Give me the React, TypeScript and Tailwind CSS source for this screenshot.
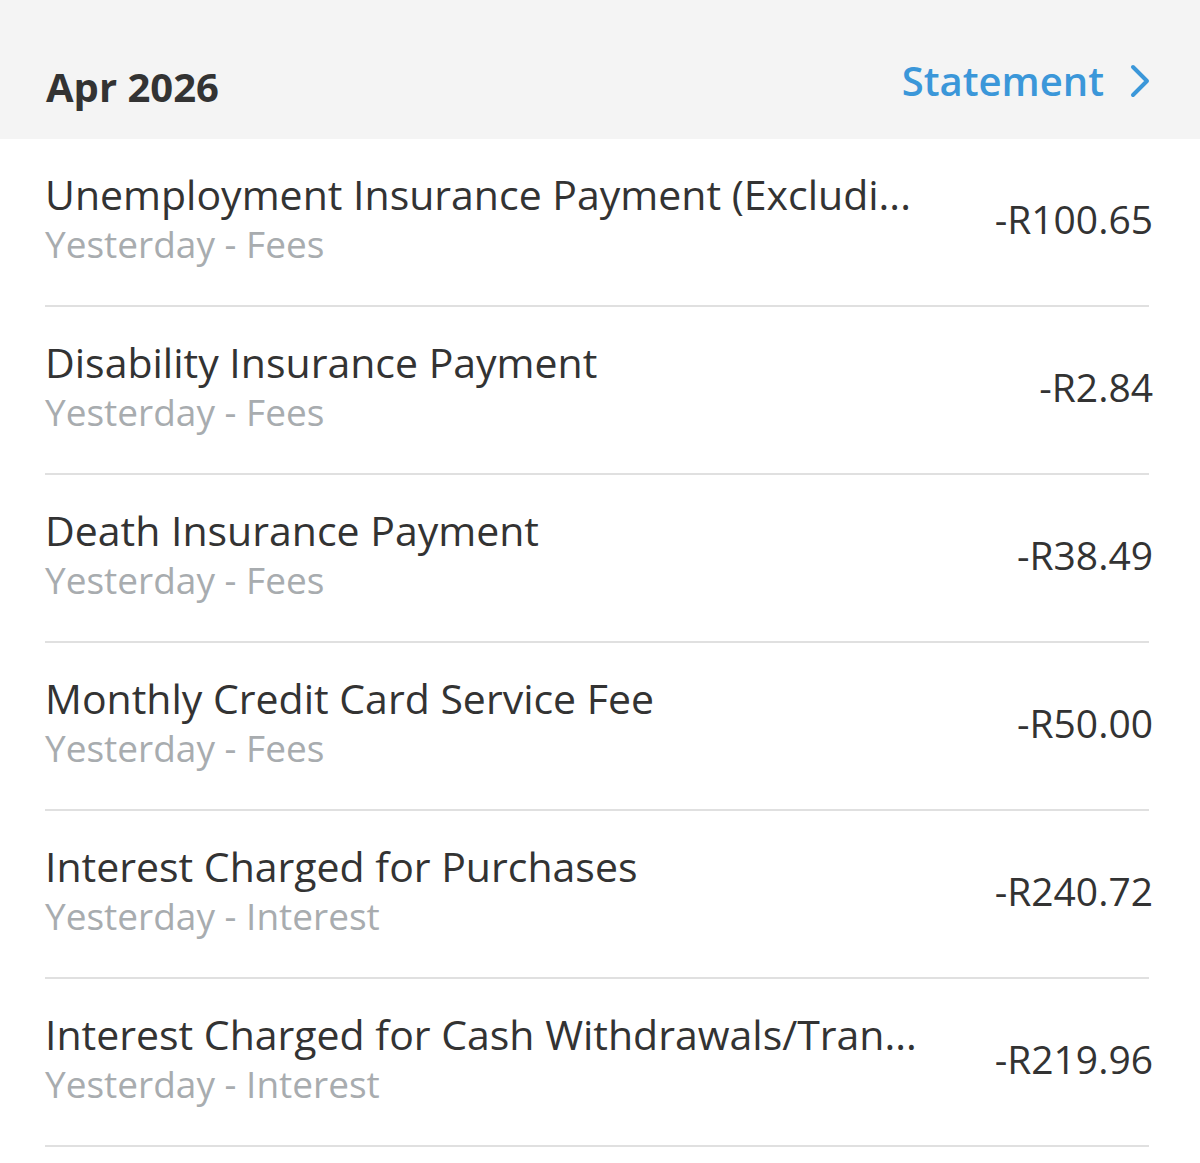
import React from "react";

interface Txn {
  title: string;
  when: string;
  category: string;
  amount: string;
}

const txns: Txn[] = [
  { title: "Unemployment Insurance Payment (Excludi...", when: "Yesterday", category: "Fees", amount: "-R100.65" },
  { title: "Disability Insurance Payment", when: "Yesterday", category: "Fees", amount: "-R2.84" },
  { title: "Death Insurance Payment", when: "Yesterday", category: "Fees", amount: "-R38.49" },
  { title: "Monthly Credit Card Service Fee", when: "Yesterday", category: "Fees", amount: "-R50.00" },
  { title: "Interest Charged for Purchases", when: "Yesterday", category: "Interest", amount: "-R240.72" },
  { title: "Interest Charged for Cash Withdrawals/Tran...", when: "Yesterday", category: "Interest", amount: "-R219.96" },
];

function TxnRow({ txn }: { txn: Txn }) {
  return (
    <div className="ml-[45px] mr-[51px] border-b-2 border-[#e0e0e0] h-[168px] flex items-center justify-between">
      <div className="min-w-0 -mt-[6px]">
        <div className="text-[41px] leading-[50px] text-[#333333] whitespace-nowrap">{txn.title}</div>
        <div className="text-[37px] leading-[50px] text-[#a8acaf]">
          {txn.when} - {txn.category}
        </div>
      </div>
      <div className="text-[39px] text-[#333333] -mr-[4px] -mt-[6px] shrink-0">{txn.amount}</div>
    </div>
  );
}

export default function App() {
  return (
    <div className="w-[1200px] min-h-[1163px] bg-white font-['Open_Sans',sans-serif]">
      <div className="h-[139px] bg-[#f4f4f4] flex items-end justify-between pl-[46px] pr-[50px] pb-[32px]">
        <h1 className="text-[40px] font-bold text-[#333333] leading-none">Apr 2026</h1>
        <button className="flex items-center gap-[26px] text-[40px] font-semibold text-[#3b97d9] leading-none mb-[6px]">
          Statement
          <svg width="20" height="34" viewBox="0 0 20 34" fill="none">
            <path d="M3 3 L17 17 L3 31" stroke="#3b97d9" strokeWidth="4" strokeLinecap="round" strokeLinejoin="round" />
          </svg>
        </button>
      </div>
      <div>
        {txns.map((t, i) => (
          <TxnRow key={i} txn={t} />
        ))}
      </div>
    </div>
  );
}
